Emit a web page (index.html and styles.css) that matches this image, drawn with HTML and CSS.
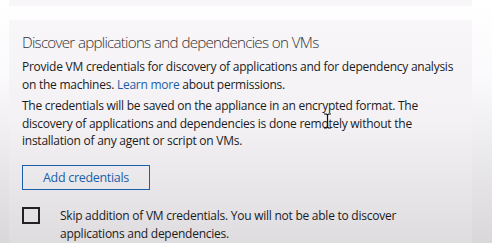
FILE: index.html
```html
<!DOCTYPE html>
<html lang="en">

<head>
  <meta charset="UTF-8">
  <meta name="viewport" content="width=device-width, initial-scale=1.0">
  <title>Discover applications</title>
  <link rel="stylesheet" href="styles.css">
</head>

<body>
  <div class="page">
    <div class="panel panel-prev"></div>
    <div class="panel">
      <h2 class="title">Discover applications and dependencies on VMs</h2>
      <p class="text">Provide VM credentials for discovery of applications and for dependency analysis<br>
        on the machines. <a href="#" class="link">Learn more</a> about permissions.</p>
      <p class="text">The credentials will be saved on the appliance in an encrypted format. The<br>
        discovery of applications and dependencies is done remotely without the<br>
        installation of any agent or script on VMs.</p>
      <button class="button" type="button">Add credentials</button>
      <label class="check">
        <span class="box"></span>
        <span class="check-text">Skip addition of VM credentials. You will not be able to discover<br>
          applications and dependencies.</span>
      </label>
    </div>
  </div>
  <!-- text cursor -->
  <svg class="cursor" width="9" height="16" viewBox="0 0 9 16">
    <path d="M1 1h2.5l1 1 1-1H8M1 15h2.5l1-1 1 1H8M4.5 2v12" fill="none" stroke="#111" stroke-width="1.2"/>
  </svg>
</body>

</html>
```

FILE: styles.css
```css
html,
body {
  margin: 0;
  padding: 0;
  height: 243px;
  overflow: hidden;
  background: linear-gradient(#ffffff, #fbfafc 30%, #d9d7da);
  color: #1b1b1b;
  font-family: "Segoe UI", "Open Sans", sans-serif;
  font-size: 12px;
  letter-spacing: -0.25px;
}

* {
  box-sizing: border-box;
}

.page {
  display: flex;
  flex-direction: column;
  gap: 14px;
  padding: 0 20px 0 9px;
}

.panel {
  background: linear-gradient(#f8f6f9, #f3f1f4 45%, #dddbde);
  padding: 11px 13px 0;
  height: 230px;
}

.panel-prev {
  height: 6px;
  padding: 0;
  background: #f8f6f9;
}

.title {
  margin: 0 0 5px;
  font-size: 15.2px;
  font-weight: 300;
  letter-spacing: -0.78px;
  word-spacing: 0.5px;
  color: #333;
  line-height: 22px;
}

.text {
  margin: 0 0 4px;
  line-height: 17.5px;
  white-space: nowrap;
}

.link {
  color: #1a5fa8;
  text-decoration: none;
}

.button {
  display: block;
  margin-top: 15px;
  width: 128px;
  height: 25px;
  background: transparent;
  border: 1.5px solid #1a5fa8;
  color: #1a5fa8;
  font-family: inherit;
  font-size: 12.5px;
  letter-spacing: -0.3px;
  padding: 0;
}

.check {
  display: flex;
  gap: 20px;
  margin-top: 17px;
  line-height: 18px;
  white-space: nowrap;
}

.box {
  flex: none;
  width: 18px;
  height: 17px;
  border: 2px solid #222;
}

.cursor {
  position: absolute;
  left: 323px;
  top: 113px;
}
```
